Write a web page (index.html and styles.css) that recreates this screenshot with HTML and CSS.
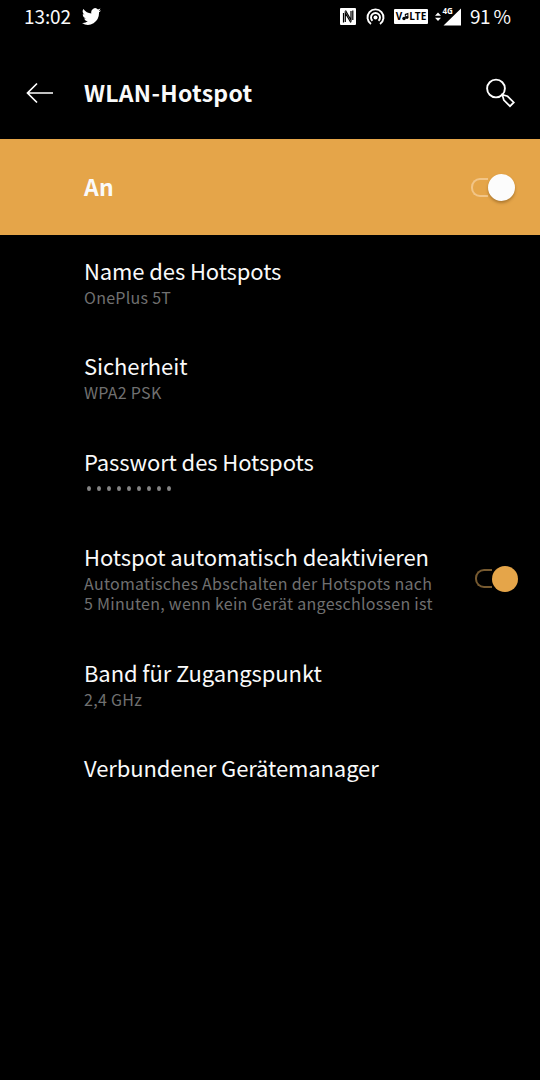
FILE: index.html
```html
<!DOCTYPE html>
<html lang="de">
<head>
    <meta charset="UTF-8">
    <meta name="viewport" content="width=device-width, initial-scale=1.0">
    <title>WLAN-Hotspot</title>
    <link rel="stylesheet" href="styles.css">
</head>
<body>
    <div class="status-bar">
        <span class="clock">13:02</span>
        <svg class="twitter" width="19" height="17" viewBox="0 2 24 20" preserveAspectRatio="none" fill="#fff">
            <path d="M24 4.6a10 10 0 0 1-2.8.8 5 5 0 0 0 2.1-2.7 10 10 0 0 1-3.1 1.2A4.9 4.9 0 0 0 11.8 8.4 14 14 0 0 1 1.7 3.2a4.9 4.9 0 0 0 1.5 6.6 5 5 0 0 1-2.2-.6 4.9 4.9 0 0 0 3.9 4.9 5 5 0 0 1-2.2.1 4.9 4.9 0 0 0 4.6 3.4A9.9 9.9 0 0 1 0 19.6 14 14 0 0 0 21.5 7.1 10 10 0 0 0 24 4.6z"/>
        </svg>
        <div class="status-icons">
            <svg width="16" height="17" viewBox="0 0 16 17">
                <rect width="16" height="17" rx="1" fill="#fff"/>
                <path d="M3.500 14.500V5M5.500 2.500l5.500 9.500V3M12.800 2.500V12M10.800 14.500 5.300 5v9" fill="none" stroke="#000" stroke-width="1.200"/>
            </svg>
            <svg class="hotspot" width="19" height="18" viewBox="0 0 19 18" fill="none" stroke="#fff" stroke-width="1.900">
                <path d="M5 16a8 8 0 1 1 9 0"/>
                <path d="M6.500 12.800a4.500 4.500 0 1 1 6 0"/>
                <circle cx="9.500" cy="9.500" r="2" fill="#fff" stroke="none"/>
            </svg>
            <div class="volte">V<svg width="7" height="9" viewBox="0 0 7 9" fill="#000"><circle cx="2" cy="6.500" r="1.700"/><circle cx="5" cy="5.500" r="1.400"/><path d="M2.800 6.500V2L6.400.8v4.700h-1V2.400l-1.600.5v3.600z"/></svg>LTE</div>
            <svg class="signal" width="27" height="22" viewBox="0 0 27 22" fill="#fff">
                <path d="M0 9.800 3 6.500l3 3.300zM0 11.700h6L3 15zM8.500 19.500 26 2.500v17z"/>
                <text x="7.500" y="8" class="signal-label">4G</text>
            </svg>
            <span class="battery">91 %</span>
        </div>
    </div>

    <header class="header">
        <svg class="back" width="28" height="22" viewBox="0 0 28 22" fill="none" stroke="#fff" stroke-width="1.700">
            <path d="M11 1.500 1.500 11l9.500 9.500M1.500 11H27"/>
        </svg>
        <h1>WLAN-Hotspot</h1>
        <svg class="search" width="32" height="32" viewBox="0 0 32 32" fill="none" stroke="#fff" stroke-width="1.900">
            <circle cx="12" cy="11.500" r="8.900"/>
            <path d="M18.300 17.800 19.800 23 26 29.200 29.800 25.400 23.600 19.300z" stroke-width="1.700"/>
        </svg>
    </header>

    <div class="banner">
        <span>An</span>
        <div class="switch switch-light"></div>
    </div>

    <div class="settings">
        <div class="row">
            <div class="row-title">Name des Hotspots</div>
            <div class="row-sub">OnePlus 5T</div>
        </div>
        <div class="row">
            <div class="row-title">Sicherheit</div>
            <div class="row-sub">WPA2 PSK</div>
        </div>
        <div class="row">
            <div class="row-title">Passwort des Hotspots</div>
            <div class="dots">
                <i></i><i></i><i></i><i></i><i></i><i></i><i></i><i></i><i></i>
            </div>
        </div>
        <div class="row row-switch">
            <div>
                <div class="row-title">Hotspot automatisch deaktivieren</div>
                <div class="row-sub">Automatisches Abschalten der Hotspots nach<br>5 Minuten, wenn kein Gerät angeschlossen ist</div>
            </div>
            <div class="switch"></div>
        </div>
        <div class="row">
            <div class="row-title">Band für Zugangspunkt</div>
            <div class="row-sub">2,4 GHz</div>
        </div>
        <div class="row">
            <div class="row-title">Verbundener Gerätemanager</div>
        </div>
    </div>
</body>
</html>
```
FILE: styles.css
```css
:root {
    --accent: #e5a549;
    --text: #fafafa;
    --muted: #707070;
}

*, *::before, *::after {
    margin: 0;
    padding: 0;
    box-sizing: border-box;
}

body {
    background: #000;
    color: var(--text);
    font-family: "Noto Sans CJK SC", "Noto Sans", sans-serif;
    min-height: 100vh;
}

svg {
    display: block;
    flex-shrink: 0;
}

.status-bar {
    display: flex;
    align-items: center;
    height: 33px;
    padding: 0 29px 0 24px;
    font-size: 19px;
    line-height: 31px;
}

.clock,
.battery {
    height: 33px;
}

.clock {
    width: 58px;
    letter-spacing: -0.1px;
}

.status-icons {
    display: flex;
    align-items: center;
    margin-left: auto;
}

.hotspot {
    margin-left: 10px;
}

.volte {
    display: flex;
    align-items: center;
    justify-content: center;
    width: 34px;
    height: 15px;
    margin-left: 9px;
    background: #fff;
    color: #000;
    font: bold 10px/15px "Open Sans", sans-serif;
    border-radius: 1px;
}

.signal {
    margin-left: 7px;
}

.signal-label {
    font: bold 8px "Open Sans", sans-serif;
}

.battery {
    margin-left: 8px;
    width: 41px;
    letter-spacing: -0.6px;
    white-space: nowrap;
}

.header {
    display: flex;
    align-items: center;
    height: 106px;
    padding: 14px 24px 0 26px;
}

.header h1 {
    margin: -2px 0 0 30px;
    font-size: 23px;
    line-height: 32px;
    font-weight: 700;
    letter-spacing: 0.3px;
}

.search {
    margin-left: auto;
}

.banner {
    display: flex;
    align-items: center;
    justify-content: space-between;
    height: 96px;
    padding: 0 26px 0 84px;
    background: var(--accent);
    font-size: 23px;
    font-weight: 700;
}

.banner span {
    padding-bottom: 2px;
    letter-spacing: 0.3px;
}

.row {
    height: 95.5px;
    padding: 20.9px 22px 0 84px;
}

.row-title {
    font-size: 22px;
    line-height: 28px;
    letter-spacing: -0.1px;
    white-space: nowrap;
}

.row-sub {
    margin-top: 3.1px;
    color: var(--muted);
    font-size: 16px;
    line-height: 20px;
    letter-spacing: 0.28px;
    white-space: nowrap;
}

.dots {
    display: flex;
    gap: 6px;
    padding: 11.5px 0 0 3px;
}

.dots i {
    width: 4px;
    height: 5px;
    border-radius: 50%;
    background: #858585;
}

.row-switch {
    display: flex;
    justify-content: space-between;
    height: 115.5px;
}

.row-switch .switch {
    margin-top: 22.6px;
}

/* outlined track with the knob at its right end */
.switch {
    display: flex;
    align-items: center;
    width: 43px;
    height: 28px;
}

.switch::before {
    content: "";
    width: 17px;
    height: 19px;
    border: 2px solid #775a30;
    border-right: 0;
    border-radius: 9px 0 0 9px;
}

.switch::after {
    content: "";
    width: 26px;
    height: 26px;
    border-radius: 50%;
    background: var(--accent);
}

.switch-light::before {
    border-color: #f2c587;
}

.switch-light::after {
    width: 27px;
    height: 27px;
    margin-right: -1px;
    background: #fcfcfc;
    box-shadow: 0 2px 3px rgba(90, 55, 10, 0.4);
}
```
